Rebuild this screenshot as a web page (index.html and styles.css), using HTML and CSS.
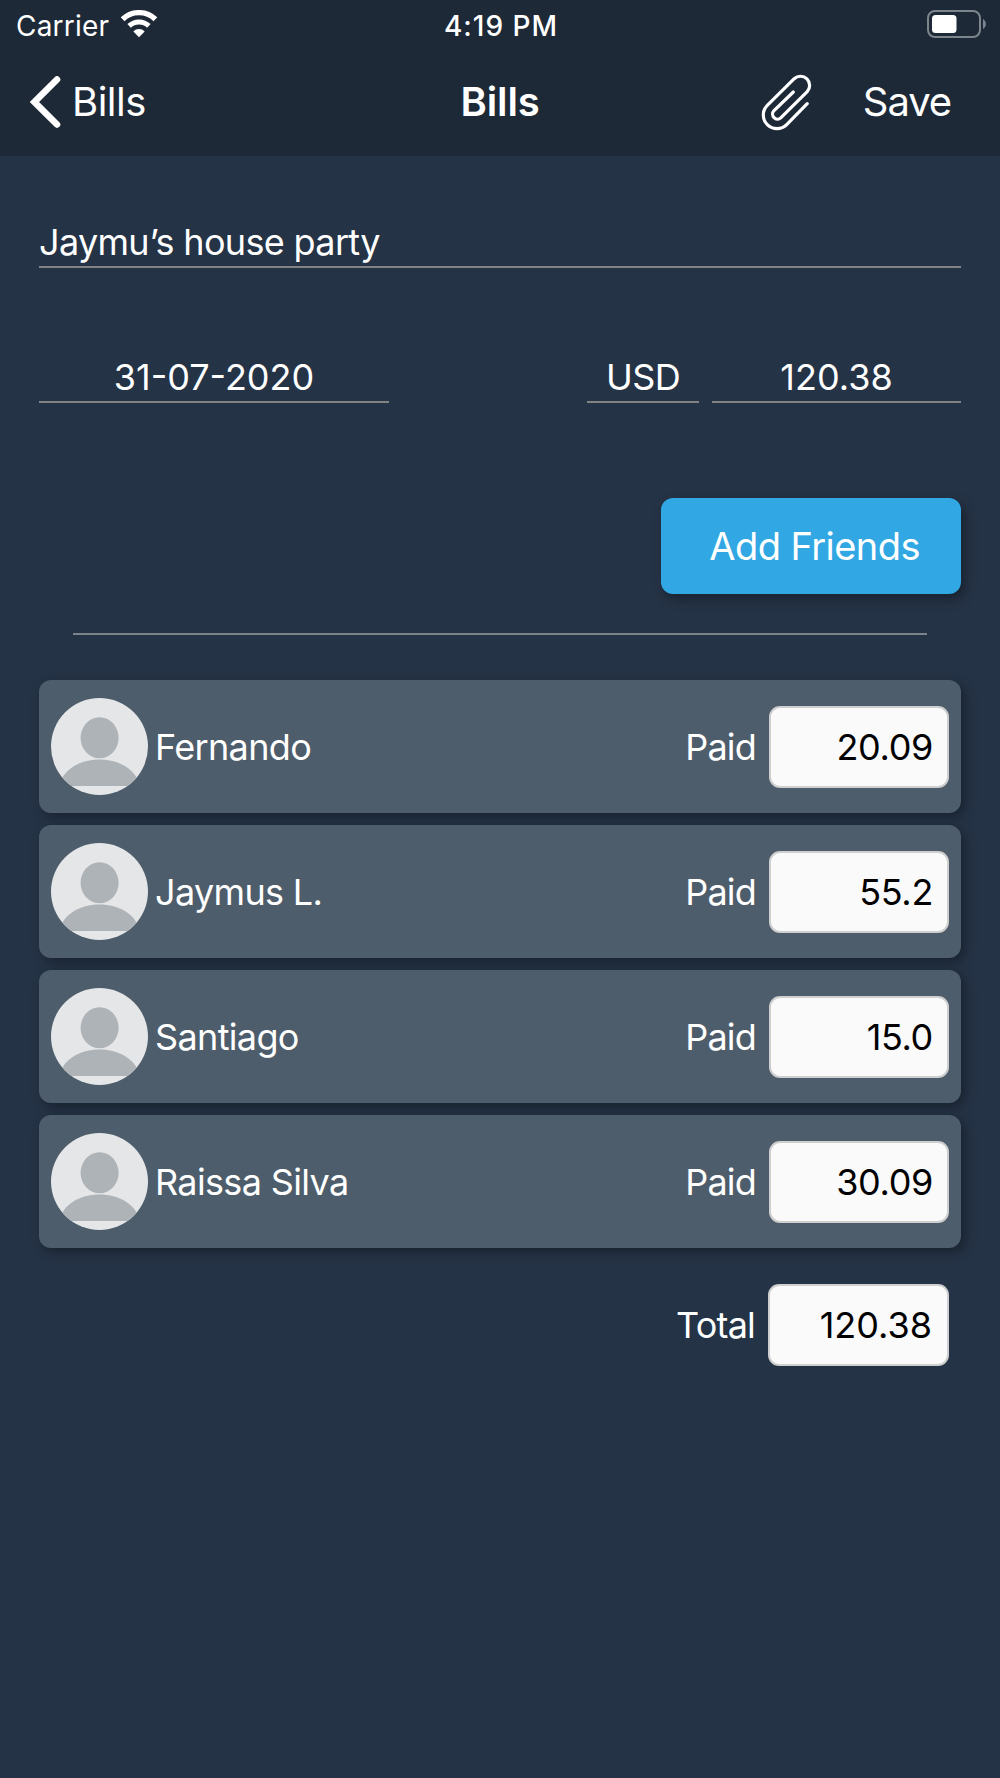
FILE: index.html
```
<!DOCTYPE html>
<html lang="en">
<head>
	<meta charset="utf-8">
	<title>Bills</title>
	<meta name="viewport" content="width=device-width, initial-scale=1.0">
	<link rel="stylesheet" href="styles.css">
</head>
<body>

	<!-- avatar shared by all friend rows -->
	<svg class="defs" width="0" height="0">
		<defs>
			<clipPath id="round"><circle cx="48.5" cy="48.5" r="48.5"/></clipPath>
			<symbol id="avatar" viewBox="0 0 97 97">
				<g clip-path="url(#round)">
					<rect width="97" height="97" fill="#e4e6e8"/>
					<ellipse cx="48.6" cy="39.8" rx="19" ry="20.5" fill="#aeb3b7"/>
					<path d="M8 88C12 71 29 61.5 48.5 61.5S85 71 89 88Z" fill="#aeb3b7"/>
				</g>
			</symbol>
		</defs>
	</svg>

	<div class="header">
		<div class="status-bar">
			<div class="status-left">
				<span class="carrier">Carrier</span>
				<svg class="wifi" width="38" height="28" viewBox="0 0 38 28">
					<path d="M2.6 9.3A23.6 23.6 0 0 1 35.4 9.3" fill="none" stroke="#fff" stroke-width="5.4"/>
					<path d="M9.1 15.9A14.3 14.3 0 0 1 28.9 15.9" fill="none" stroke="#fff" stroke-width="5"/>
					<path d="M19 27.3L13.3 21.4A8.2 8.2 0 0 1 24.7 21.4Z" fill="#fff"/>
				</svg>
			</div>
			<span class="clock">4:19 PM</span>
			<svg class="battery" width="60" height="28" viewBox="0 0 60 28">
				<rect x="1" y="1" width="52" height="26" rx="7" fill="none" stroke="#7c848c" stroke-width="2"/>
				<rect x="5" y="5" width="24.5" height="18" rx="3.5" fill="#fff"/>
				<path d="M56 9C59.8 11 59.8 17 56 19Z" fill="#7c848c"/>
			</svg>
		</div>
		<div class="nav-bar">
			<div class="nav-back">
				<svg width="32" height="52" viewBox="0 0 32 52">
					<path d="M27 3.5L4.5 26L27 48.5" fill="none" stroke="#fff" stroke-width="6.6" stroke-linecap="round"/>
				</svg>
				<span class="back-text">Bills</span>
			</div>
			<h1 class="nav-title">Bills</h1>
			<div class="nav-actions">
				<svg width="56" height="60" viewBox="0 0 56 60">
					<path d="M49.2 31.7L28.7 52.7A13.7 13.7 0 0 1 9.3 33.3L36.2 6.7A9.2 9.2 0 0 1 49.2 19.7L22.8 45.9A5 5 0 0 1 15.8 38.8L35.3 20" fill="none" stroke="#fff" stroke-width="3.2" stroke-linecap="round"/>
				</svg>
				<span class="save">Save</span>
			</div>
		</div>
	</div>

	<div class="content">
		<div class="field field-name">Jaymu’s house party</div>

		<div class="field-row">
			<div class="field field-date">31-07-2020</div>
			<div class="field field-currency">USD</div>
			<div class="field field-amount">120.38</div>
		</div>

		<div class="button">Add Friends</div>

		<div class="divider"></div>

		<div class="friends">
			<div class="friend">
				<svg class="avatar"><use href="#avatar"/></svg>
				<span class="friend-name">Fernando</span>
				<span class="label">Paid</span>
				<div class="box">20.09</div>
			</div>
			<div class="friend">
				<svg class="avatar"><use href="#avatar"/></svg>
				<span class="friend-name">Jaymus L.</span>
				<span class="label">Paid</span>
				<div class="box">55.2</div>
			</div>
			<div class="friend">
				<svg class="avatar"><use href="#avatar"/></svg>
				<span class="friend-name">Santiago</span>
				<span class="label">Paid</span>
				<div class="box">15.0</div>
			</div>
			<div class="friend">
				<svg class="avatar"><use href="#avatar"/></svg>
				<span class="friend-name">Raissa Silva</span>
				<span class="label">Paid</span>
				<div class="box">30.09</div>
			</div>
		</div>

		<div class="total">
			<span class="label">Total</span>
			<div class="box box-total">120.38</div>
		</div>
	</div>

</body>
</html>
```
FILE: styles.css
```
* {
	margin: 0;
	padding: 0;
	box-sizing: border-box;
}

body {
	min-height: 1778px;
	background-color: #253346;
	font-family: Inter, "Liberation Sans", sans-serif;
	font-size: 36px;
	line-height: 44px;
	color: #fff;
	white-space: nowrap;
}

svg {
	display: block;
	flex-shrink: 0;
}

.defs {
	position: absolute;
}

.header {
	height: 156px;
	background-color: #1d2937;
}

/* status bar */

.status-bar {
	display: grid;
	grid-template-columns: 1fr auto 1fr;
	height: 50px;
	padding: 0 13px 0 16px;
}

.status-left {
	display: flex;
	align-items: flex-start;
}

.carrier {
	width: 104px;
	margin-top: 4px;
	font-size: 28px;
	letter-spacing: 0.2px;
}

.wifi {
	margin-top: 10px;
}

.clock {
	margin: 4px 0 0 -1px;
	font-size: 28px;
	font-weight: 500;
	letter-spacing: 1px;
}

.battery {
	margin-top: 10px;
	justify-self: end;
}

/* navigation bar */

.nav-bar {
	display: grid;
	grid-template-columns: minmax(0, 1fr) auto minmax(0, 1fr);
	align-items: center;
	height: 104px;
	padding: 0 30px;
	font-size: 40px;
}

.nav-back {
	display: flex;
	align-items: center;
	gap: 10px;
}

.back-text {
	letter-spacing: -0.5px;
}

.nav-title {
	font-size: 40px;
	font-weight: 600;
	letter-spacing: -0.1px;
}

.nav-actions {
	display: flex;
	align-items: center;
	justify-content: flex-end;
	gap: 49px;
	padding-right: 19px;
}

.save {
	letter-spacing: -1.1px;
}

/* bill form */

.content {
	padding: 62px 39px 0;
}

.field {
	height: 50px;
	padding-top: 2px;
	border-bottom: 2px solid #838383;
	text-align: center;
}

.field-name {
	letter-spacing: -0.66px;
	text-align: left;
}

.field-row {
	display: flex;
	margin-top: 85px;
}

.field-date {
	width: 350px;
}

.field-currency {
	width: 112px;
	margin-left: auto;
	letter-spacing: -0.6px;
}

.field-amount {
	width: 249px;
	margin-left: 13px;
}

.button {
	width: 300px;
	height: 96px;
	margin: 95px 0 0 auto;
	padding: 26px 41px 0 0;
	border-radius: 12px;
	background-color: #31a8e3;
	box-shadow: 4px 5px 12px rgba(0, 0, 0, 0.35);
	font-size: 38px;
	letter-spacing: -0.55px;
	text-align: right;
}

.divider {
	height: 2px;
	margin: 39px 34px 0;
	background-color: #7b828a;
}

/* friends */

.friends {
	display: grid;
	gap: 12px;
	margin-top: 45px;
}

.friend {
	display: flex;
	align-items: center;
	height: 133px;
	padding: 0 12px 0 11.5px;
	border-radius: 12px;
	background-color: #4e5d6b;
	box-shadow: 4px 4px 12px rgba(0, 0, 0, 0.35);
}

.avatar {
	width: 97px;
	height: 97px;
}

.friend-name {
	margin-left: 7.5px;
	letter-spacing: -0.65px;
}

.label {
	margin-left: auto;
	letter-spacing: -0.8px;
}

.box {
	width: 180px;
	height: 82px;
	margin-left: 13px;
	padding: 17px 14px 0 0;
	border: 2px solid #cfcfcf;
	border-radius: 11px;
	background-color: #fafafa;
	color: #000;
	letter-spacing: -0.35px;
	text-align: right;
}

.total {
	display: flex;
	align-items: center;
	margin-top: 36px;
	padding-right: 12px;
}

.box-total {
	width: 181px;
	padding-right: 15px;
	letter-spacing: 0;
}
```
